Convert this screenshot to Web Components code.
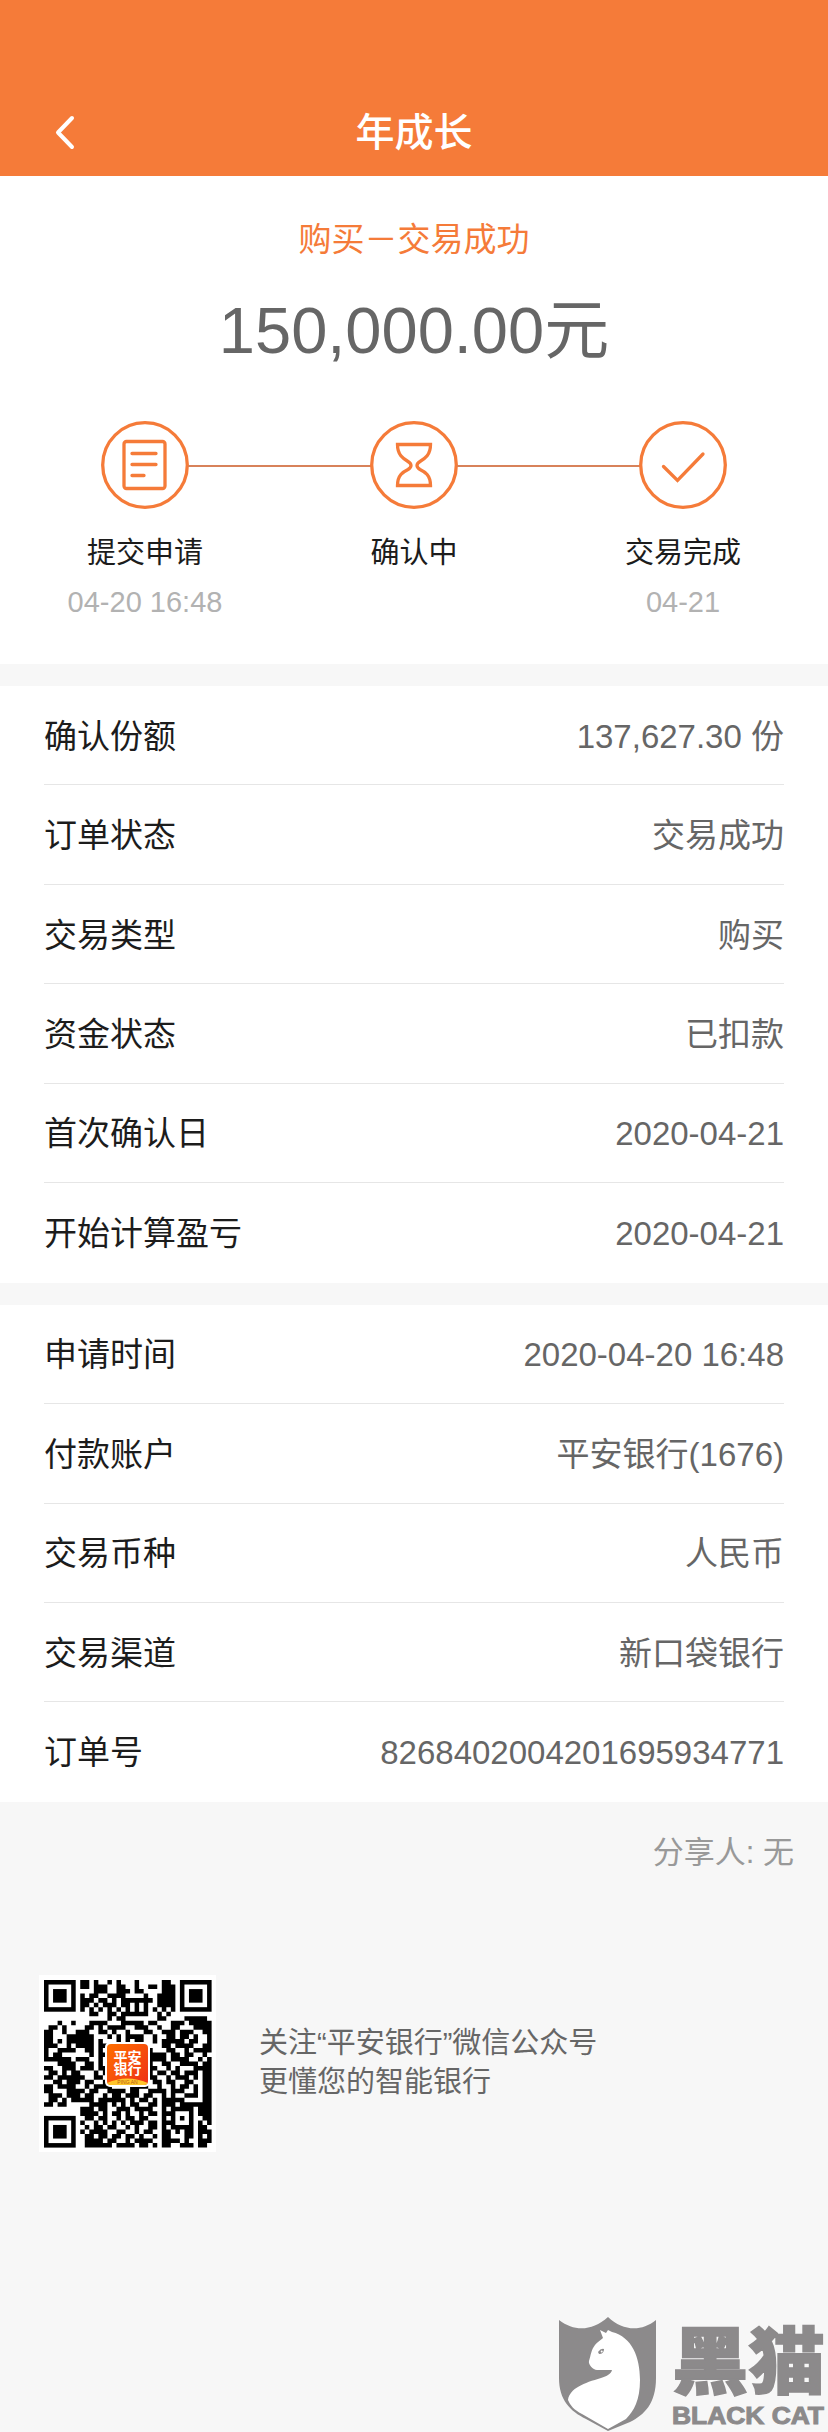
<!DOCTYPE html>
<html lang="zh-CN">
<head>
    <meta charset="UTF-8">
    <meta name="viewport" content="width=device-width, initial-scale=1.0">
    <title>年成长</title>
    <style>
        body {
            margin: 0;
            background: #f7f7f7;
            font-family: "Liberation Sans", "Noto Sans CJK SC", sans-serif;
        }
    </style>
</head>
<body>
    <order-page>
        <nav-header>年成长</nav-header>
        <order-summary status="购买－交易成功" amount="150,000.00元">
            <progress-step icon="form" label="提交申请" time="04-20 16:48"></progress-step>
            <progress-step icon="hourglass" label="确认中"></progress-step>
            <progress-step icon="check" label="交易完成" time="04-21"></progress-step>
        </order-summary>
        <info-group>
            <info-row label="确认份额">137,627.30 份</info-row>
            <info-row label="订单状态">交易成功</info-row>
            <info-row label="交易类型">购买</info-row>
            <info-row label="资金状态">已扣款</info-row>
            <info-row label="首次确认日">2020-04-21</info-row>
            <info-row label="开始计算盈亏">2020-04-21</info-row>
        </info-group>
        <info-group>
            <info-row label="申请时间">2020-04-20 16:48</info-row>
            <info-row label="付款账户">平安银行(1676)</info-row>
            <info-row label="交易币种">人民币</info-row>
            <info-row label="交易渠道">新口袋银行</info-row>
            <info-row label="订单号">8268402004201695934771</info-row>
        </info-group>
        <page-footer>
            <span slot="share">分享人: 无</span>
            <qr-code slot="code"></qr-code>
            <div>关注“平安银行”微信公众号</div>
            <div>更懂您的智能银行</div>
        </page-footer>
        <cat-logo></cat-logo>
    </order-page>

    <script>
        class OrderPage extends HTMLElement {
            constructor() {
                super();
                this.attachShadow({ mode: 'open' }).innerHTML = `
                    <style>
                        :host {
                            display: flex;
                            flex-direction: column;
                            width: 828px;
                            height: 2432px;
                            overflow: hidden;
                            background: #f7f7f7;
                        }
                    </style>
                    <slot></slot>
                `;
            }
        }

        class NavHeader extends HTMLElement {
            constructor() {
                super();
                this.attachShadow({ mode: 'open' }).innerHTML = `
                    <style>
                        :host {
                            display: grid;
                            grid-template-columns: 1fr auto 1fr;
                            align-items: center;
                            height: 88px;
                            padding: 88px 54px 0;
                            background: #f57b39;
                            color: #fff;
                            font-size: 39px;
                            font-weight: 500;
                            line-height: 90px;
                        }
                        svg {
                            display: block;
                        }
                    </style>
                    <svg width="22" height="36" viewBox="0 0 22 36" fill="none" stroke="#fff" stroke-width="4" stroke-linecap="round" stroke-linejoin="round">
                        <path d="M18 3 4 17.5 18 32"/>
                    </svg>
                    <span><slot></slot></span>
                `;
            }
        }

        class OrderSummary extends HTMLElement {
            constructor() {
                super();
                this.attachShadow({ mode: 'open' }).innerHTML = `
                    <style>
                        :host {
                            display: block;
                            height: 488px;
                            background: #fff;
                            text-align: center;
                        }
                        .status {
                            padding-top: 39px;
                            color: #f57b39;
                            font-size: 33px;
                            line-height: 50px;
                        }
                        .amount {
                            margin-top: 16px;
                            color: #666;
                            font-size: 65px;
                            line-height: 100px;
                        }
                        .steps {
                            display: grid;
                            grid-template-columns: repeat(3, 269px);
                            justify-content: center;
                            margin-top: 39px;
                        }
                    </style>
                    <div class="status">${this.getAttribute('status')}</div>
                    <div class="amount">${this.getAttribute('amount')}</div>
                    <div class="steps"><slot></slot></div>
                `;
            }
        }

        const stepIcons = {
            form: `
                <rect x="23" y="21.5" width="41" height="47" rx="2.5"/>
                <path d="M31 33.5H55M31 44.5H55M31 55.5H43" stroke-linecap="round"/>`,
            hourglass: `
                <path d="M27.5 24.5H60.5C60.5 35 55 38.5 50 41.5C46 44 46 47 50 49.5C55 52 60.5 55 60.5 65.5H27.5C27.5 55 33 52 38 49.5C42 47 42 44 38 41.5C33 38.5 27.5 35 27.5 24.5Z"/>`,
            check: `
                <path d="M24.5 46.5 38.5 60.5 64 34" stroke-linecap="round"/>`
        };

        class ProgressStep extends HTMLElement {
            constructor() {
                super();
                this.attachShadow({ mode: 'open' }).innerHTML = `
                    <style>
                        :host {
                            display: block;
                        }
                        .track {
                            display: flex;
                            align-items: center;
                        }
                        .track::before,
                        .track::after {
                            content: '';
                            flex: 1;
                            height: 2px;
                            margin-top: 1px;
                            background: #d8825a;
                        }
                        :host(:first-child) .track::before,
                        :host(:last-child) .track::after {
                            background: none;
                        }
                        svg {
                            display: block;
                            margin: 0 -1px;
                        }
                        .label {
                            margin-top: 19px;
                            color: #1c1c1c;
                            font-size: 29px;
                            line-height: 48px;
                        }
                        .time {
                            color: #b2b2b2;
                            font-size: 29px;
                            line-height: 50px;
                        }
                    </style>
                    <div class="track">
                        <svg width="88" height="90" viewBox="0 0 88 90" fill="none" stroke="#f57b39" stroke-width="3.3">
                            <circle cx="44" cy="45" r="42.3"/>
                            ${stepIcons[this.getAttribute('icon')]}
                        </svg>
                    </div>
                    <div class="label">${this.getAttribute('label')}</div>
                    <div class="time">${this.getAttribute('time') || ''}</div>
                `;
            }
        }

        class InfoGroup extends HTMLElement {
            constructor() {
                super();
                this.attachShadow({ mode: 'open' }).innerHTML = `
                    <style>
                        :host {
                            display: block;
                            margin-top: 22px;
                            padding: 0 44px;
                            background: #fff;
                        }
                    </style>
                    <slot></slot>
                `;
            }
        }

        class InfoRow extends HTMLElement {
            constructor() {
                super();
                this.attachShadow({ mode: 'open' }).innerHTML = `
                    <style>
                        :host {
                            display: flex;
                            justify-content: space-between;
                            align-items: center;
                            box-sizing: border-box;
                            height: 99.45px;
                            padding-top: 3px;
                            border-bottom: 1px solid #e6e6e6;
                            color: #666;
                            font-size: 33px;
                            line-height: 48px;
                        }
                        :host(:last-child) {
                            border-bottom-color: transparent;
                        }
                        .label {
                            color: #1c1c1c;
                        }
                    </style>
                    <span class="label">${this.getAttribute('label')}</span>
                    <span><slot></slot></span>
                `;
            }
        }

        class PageFooter extends HTMLElement {
            constructor() {
                super();
                this.attachShadow({ mode: 'open' }).innerHTML = `
                    <style>
                        :host {
                            display: block;
                            padding: 27px 34px 0 39px;
                        }
                        .share {
                            color: #999;
                            font-size: 31px;
                            line-height: 48px;
                            text-align: right;
                        }
                        .follow {
                            display: flex;
                            align-items: center;
                            gap: 43px;
                            margin-top: 98px;
                            color: #666;
                            font-size: 29px;
                            line-height: 39px;
                        }
                    </style>
                    <div class="share"><slot name="share"></slot></div>
                    <div class="follow">
                        <slot name="code"></slot>
                        <div><slot></slot></div>
                    </div>
                `;
            }
        }

        // 37x37 modules, "#" is dark; the three corner marks are drawn separately
        const modules = [
            '........##.#..#.#...#.....##.........',
            '........##.###..##..#..##.###........',
            '...........###..###.##....###........',
            '........#.##..####....#..####........',
            '........###.##.#.#######.####........',
            '........##.#.###.##.#.#..####........',
            '........#.#.#.#.#.#.#.#.#.#.#........',
            '..........##..##.######..#.#.........',
            '..............#.##.......##....#####.',
            '...#..#...####...#####.##...###.#####',
            '.##.#....##.#.####..###..#..##...####',
            '##..#..###..##.#..#...##..###.###..##',
            '##...######...#.#.####..#..##.##.#..#',
            '##.#.######.#...#.#.##..#.#####.##..#',
            '###..#.####.##......##....##.####..##',
            '#..####..##.#.......####...##..#.####',
            '#.##......#.##......#.#####.##.##..#.',
            '######.###..#.......#..####.####..#.#',
            '...####..##.#.......##.#..##..####.##',
            '##..###.###.##......#####..#.#...####',
            '.##.#.##...#.#......##.#.##.##.###.##',
            '##.######..##.......#.###..#.###.#.##',
            '..##.###.##..#......##..##.##..##..##',
            '##.####..#.####....####..#..#.##.#.##',
            '##...####.##..####.##..####.###..#.##',
            '.###.###.##..#.##.###.##..#.#..###.##',
            '.##.#.#####.######.#.##.#.#####....##',
            '##.##.....####.#.#.##..##.###.#######',
            '........###.##..###.####..#.#####.###',
            '........####.#.##.#..#.##.###...#.###',
            '.........##.##..#.##.##...#.#.#.#..##',
            '........#..#.#.#.#.###.##.###...#.#.#',
            '.........#.##.##..#.#..##.#.#####.##.',
            '........#.####..##..#.##..##.#.##.###',
            '.........##.##.##.##.#..#.##...##.#.#',
            '.........####.##..#.####..####.#..###',
            '.........######.####.##.#.##..###.##.'
        ];

        class QrCode extends HTMLElement {
            constructor() {
                super();
                const path = modules.map((row, y) =>
                    [...row].map((cell, x) => cell === '#' ? `M${x} ${y}h1v1h-1z` : '').join('')
                ).join('');
                const corner = (x, y) => `
                    <rect x="${x + 0.5}" y="${y + 0.5}" width="6" height="6" fill="none" stroke="#000"/>
                    <rect x="${x + 2}" y="${y + 2}" width="3" height="3"/>`;
                this.attachShadow({ mode: 'open' }).innerHTML = `
                    <style>
                        :host {
                            display: block;
                        }
                        svg {
                            display: block;
                        }
                    </style>
                    <svg width="177" height="177" viewBox="0 0 177 177">
                        <defs>
                            <linearGradient id="brand" x1="0" y1="0" x2="1" y2="1">
                                <stop offset="0" stop-color="#ff7000"/>
                                <stop offset="1" stop-color="#ee3016"/>
                            </linearGradient>
                            <clipPath id="badge"><rect x="68" y="69" width="41" height="41" rx="4"/></clipPath>
                        </defs>
                        <rect width="177" height="177" fill="#fff"/>
                        <g transform="translate(5 5) scale(4.53)">
                            <path d="${path}"/>
                            ${corner(0, 0)}${corner(30, 0)}${corner(0, 30)}
                        </g>
                        <rect x="66" y="67" width="45" height="45" rx="5" fill="#fff"/>
                        <g clip-path="url(#badge)">
                            <rect x="68" y="69" width="41" height="41" fill="url(#brand)"/>
                            <path d="M68 108Q88 99 109 108V111H68Z" fill="#ffc52b"/>
                        </g>
                        <g font-family="Noto Sans CJK SC, sans-serif" font-weight="700" fill="#fff" text-anchor="middle">
                            <text x="88.5" y="86.5" font-size="14">平安</text>
                            <text x="88.5" y="99" font-size="14">银行</text>
                        </g>
                        <text x="88.5" y="109" font-family="Liberation Sans, sans-serif" font-size="5" fill="#b35a12" text-anchor="middle">PING AN</text>
                    </svg>
                `;
            }
        }

        class CatLogo extends HTMLElement {
            constructor() {
                super();
                this.attachShadow({ mode: 'open' }).innerHTML = `
                    <style>
                        :host {
                            display: block;
                            margin: auto 0 0 auto;
                        }
                        svg {
                            display: block;
                        }
                    </style>
                    <svg width="270" height="116" viewBox="0 0 270 116" fill="#8c8a8b">
                        <path d="M1 4C17 16 34 15 50 1C65 15 83 16 98 4V62C98 88 86 99 72 106L50 115L28 103C12 95 1 84 1 62Z"/>
                        <path d="M10 84C12 72 26 67 43 62C49 60 53 58 54 54L39 54C35 54 30 48 31 45C33 39 33 34 37 29C39 26 43 24 45 22L42 14L48 17L50 14L54 16C74 21 82 41 82 64C82 84 76 95 68 103L50 113L24 98C16 94 12 89 10 84Z" fill="#fff"/>
                        <path d="M40 36Q43 32 46 33Q46 38 41 38Z"/>
                        <circle cx="43.7" cy="35.5" r="1" fill="#fff"/>
                        <text x="114" y="72" font-family="Noto Sans CJK SC, sans-serif" font-size="73" font-weight="900" stroke="#8c8a8b" stroke-width="1.5" textLength="153" lengthAdjust="spacingAndGlyphs">黑猫</text>
                        <text x="114" y="108" font-family="Liberation Sans, sans-serif" font-size="23.5" font-weight="700" stroke="#8c8a8b" stroke-width="1" textLength="152" lengthAdjust="spacingAndGlyphs">BLACK CAT</text>
                    </svg>
                `;
            }
        }

        customElements.define('order-page', OrderPage);
        customElements.define('nav-header', NavHeader);
        customElements.define('order-summary', OrderSummary);
        customElements.define('progress-step', ProgressStep);
        customElements.define('info-group', InfoGroup);
        customElements.define('info-row', InfoRow);
        customElements.define('page-footer', PageFooter);
        customElements.define('qr-code', QrCode);
        customElements.define('cat-logo', CatLogo);
    </script>
</body>
</html>
